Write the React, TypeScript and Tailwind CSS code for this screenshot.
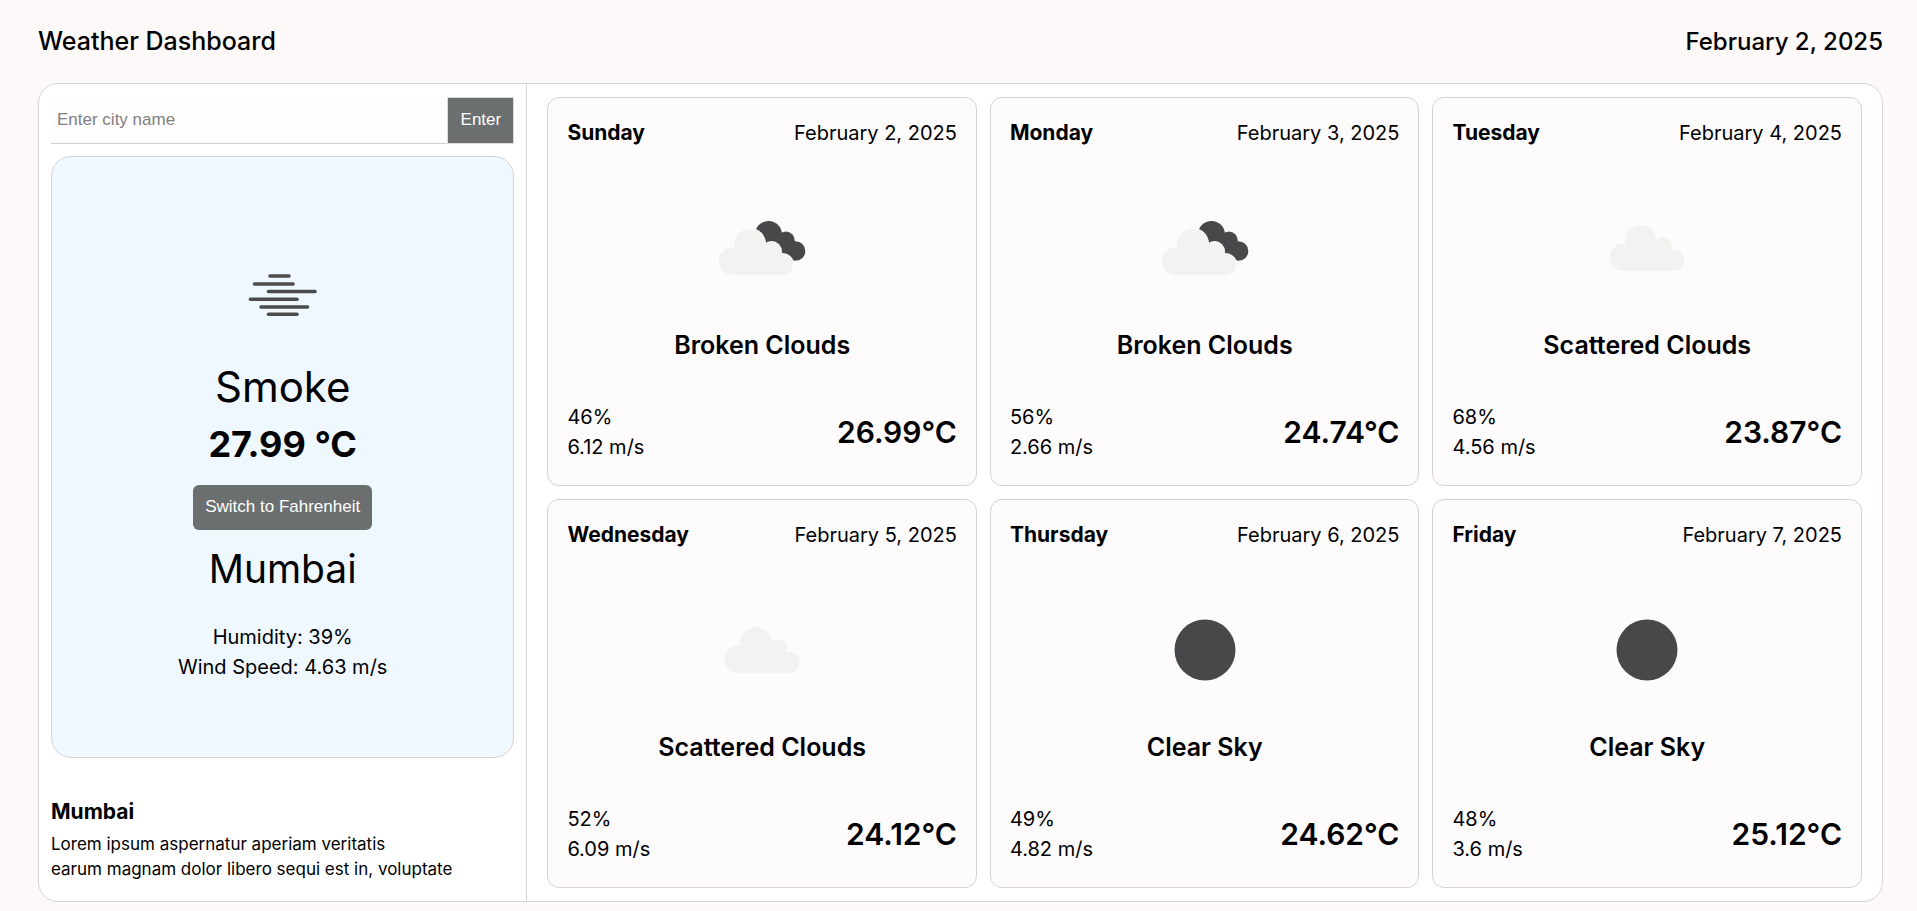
import { useState } from "react";

type Condition = "Broken Clouds" | "Scattered Clouds" | "Clear Sky";

interface Forecast {
  day: string;
  date: string;
  condition: Condition;
  humidity: number;
  wind: number;
  celsius: number;
}

const forecasts: Forecast[] = [
  { day: "Sunday", date: "February 2, 2025", condition: "Broken Clouds", humidity: 46, wind: 6.12, celsius: 26.99 },
  { day: "Monday", date: "February 3, 2025", condition: "Broken Clouds", humidity: 56, wind: 2.66, celsius: 24.74 },
  { day: "Tuesday", date: "February 4, 2025", condition: "Scattered Clouds", humidity: 68, wind: 4.56, celsius: 23.87 },
  { day: "Wednesday", date: "February 5, 2025", condition: "Scattered Clouds", humidity: 52, wind: 6.09, celsius: 24.12 },
  { day: "Thursday", date: "February 6, 2025", condition: "Clear Sky", humidity: 49, wind: 4.82, celsius: 24.62 },
  { day: "Friday", date: "February 7, 2025", condition: "Clear Sky", humidity: 48, wind: 3.6, celsius: 25.12 },
];

function formatTemp(celsius: number, fahrenheit: boolean) {
  return (fahrenheit ? celsius * 1.8 + 32 : celsius).toFixed(2);
}

function SmokeIcon() {
  return (
    <svg viewBox="0 0 100 100" className="size-[100px]" aria-hidden="true">
      <g stroke="#4c4b4e" strokeWidth="3.6" strokeLinecap="round">
        <path d="M37 31H56" />
        <path d="M21.5 39H60" />
        <path d="M35.5 46.5H82" />
        <path d="M17.5 54.3H64" />
        <path d="M28 62H74.5" />
        <path d="M35.5 69.3H64" />
      </g>
    </svg>
  );
}

function ConditionIcon({ condition }: { condition: Condition }) {
  return (
    <svg viewBox="0 0 100 100" className="size-[100px]" aria-hidden="true">
      {condition === "Clear Sky" && <circle cx="50" cy="50" r="30.5" fill="#48484a" />}
      {condition === "Scattered Clouds" && (
        <g fill="#f2f2f0">
          <circle cx="26.5" cy="59.2" r="13.8" />
          <circle cx="43.7" cy="42.5" r="15.6" />
          <circle cx="65.7" cy="48.7" r="9.5" />
          <circle cx="77" cy="62.5" r="10.5" />
          <path d="M26.5 73V50L44 40L66 46L77 58V73Z" />
        </g>
      )}
      {condition === "Broken Clouds" && (
        <>
          <g fill="#48484a">
            <circle cx="56.5" cy="36.3" r="13.4" />
            <circle cx="74" cy="42.3" r="8.7" />
            <circle cx="83.5" cy="53" r="9.8" />
            <path d="M50 40L60 30L69.2 34.6L76 37L82.4 43.6L88 50L82 62L60 58Z" />
          </g>
          <g fill="#fdfbfc">
            <circle cx="37.5" cy="46.3" r="16.6" />
            <circle cx="59.6" cy="53.5" r="10.4" />
            <circle cx="70.5" cy="66.7" r="11.6" />
          </g>
          <g fill="#f2f2f0">
            <circle cx="20.5" cy="63.2" r="13.8" />
            <circle cx="37.5" cy="46.5" r="15.6" />
            <circle cx="59.5" cy="53.5" r="9.5" />
            <circle cx="70.5" cy="66.5" r="10.5" />
            <path d="M20.5 77V54L38 44L60 50L70.5 62V77Z" />
          </g>
        </>
      )}
    </svg>
  );
}

function ForecastCard({ forecast, fahrenheit }: { forecast: Forecast; fahrenheit: boolean }) {
  return (
    <article className="flex flex-col justify-between rounded-xl border border-[#d6d2d4] bg-[#fdfbfc] px-[19px] pt-5 pb-[23px]">
      <header className="flex items-center justify-between leading-[30px]">
        <h2 className="text-[21px] font-bold">{forecast.day}</h2>
        <p className="text-xl">{forecast.date}</p>
      </header>
      <div className="flex flex-col items-center gap-[29px] pt-2.5">
        <ConditionIcon condition={forecast.condition} />
        <p className="text-[25px] leading-9 font-semibold">{forecast.condition}</p>
      </div>
      <footer className="flex items-center justify-between">
        <div className="text-xl leading-[30px]">
          <p>{forecast.humidity}%</p>
          <p>{forecast.wind} m/s</p>
        </div>
        <p className="text-3xl leading-[45px] font-semibold">
          {formatTemp(forecast.celsius, fahrenheit)}°{fahrenheit ? "F" : "C"}
        </p>
      </footer>
    </article>
  );
}

export default function App() {
  const [fahrenheit, setFahrenheit] = useState(false);

  return (
    <div className="flex min-h-screen flex-col bg-[#fdf9f8] pr-[34px] pb-[9px] pl-[38px] font-['Inter','Liberation_Sans',sans-serif] text-black">
      <header className="flex h-[83px] items-center justify-between font-medium">
        <h1 className="text-[25px]">Weather Dashboard</h1>
        <p className="text-2xl">February 2, 2025</p>
      </header>

      <main className="flex flex-1 rounded-[20px] border border-[#d6d4d4] bg-white">
        <section className="flex w-[26.5%] flex-col border-r border-[#d6d4d4] px-3 pt-[13px] pb-[19px]">
          <form
            className="flex h-[47px] font-['Liberation_Sans',sans-serif] text-[17px]"
            onSubmit={(event) => event.preventDefault()}
          >
            <input
              type="text"
              aria-label="City name"
              placeholder="Enter city name"
              className="min-w-0 flex-1 border-b border-[#d0cece] bg-[#fffdfd] px-1.5 outline-none placeholder:text-[#808080]"
            />
            <button type="submit" className="w-[67px] rounded-[1px] border border-[#dcdcdc] bg-[#6b6f6f] pb-0.5 text-white">
              Enter
            </button>
          </form>

          <div className="mt-3 flex h-[602px] flex-col items-center rounded-[20px] border border-[#d6d4d4] bg-[#f0f8ff] pt-[88px]">
            <SmokeIcon />
            <p className="mt-3 text-[42px] leading-[60px]">Smoke</p>
            <p className="text-4xl leading-[54px] font-bold">
              {formatTemp(27.99, fahrenheit)} °{fahrenheit ? "F" : "C"}
            </p>
            <button
              type="button"
              onClick={() => setFahrenheit(!fahrenheit)}
              className="mt-3.5 h-[45px] rounded-md bg-[#6b6f6f] px-3 pb-0.5 font-['Liberation_Sans',sans-serif] text-[17px] text-white"
            >
              Switch to {fahrenheit ? "Celsius" : "Fahrenheit"}
            </button>
            <h2 className="mt-3 text-[39px] leading-[54px]">Mumbai</h2>
            <div className="mt-[26px] text-center text-xl leading-[30px]">
              <p>Humidity: 39%</p>
              <p>Wind Speed: 4.63 m/s</p>
            </div>
          </div>

          <div className="mt-auto">
            <h3 className="text-[21px] leading-[30px] font-bold">Mumbai</h3>
            <p className="mt-[5px] text-[17px] leading-[25px]">
              Lorem ipsum aspernatur aperiam veritatis
              <br />
              earum magnam dolor libero sequi est in, voluptate
            </p>
          </div>
        </section>

        <section className="grid flex-1 grid-cols-3 grid-rows-2 gap-[13px] px-5 py-[13px]">
          {forecasts.map((forecast) => (
            <ForecastCard key={forecast.day} forecast={forecast} fahrenheit={fahrenheit} />
          ))}
        </section>
      </main>
    </div>
  );
}
